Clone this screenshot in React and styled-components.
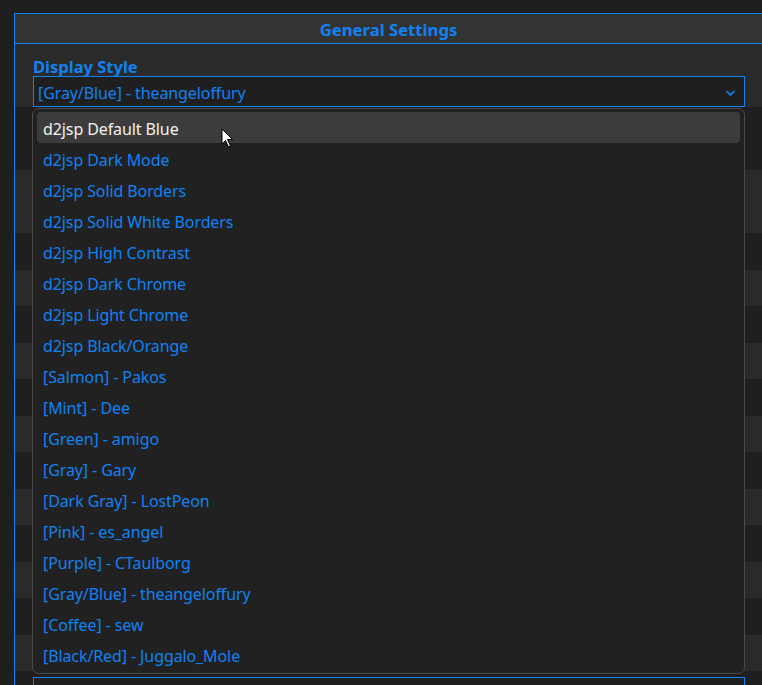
import React from 'react';
import styled, { createGlobalStyle } from 'styled-components';

const BLUE = '#1082f4';

const GlobalStyle = createGlobalStyle`
  html, body {
    margin: 0;
    background: #1f1f1f;
    font-family: "Noto Sans", "Open Sans", sans-serif;
  }
`;

const styleOptions = [
  'd2jsp Default Blue',
  'd2jsp Dark Mode',
  'd2jsp Solid Borders',
  'd2jsp Solid White Borders',
  'd2jsp High Contrast',
  'd2jsp Dark Chrome',
  'd2jsp Light Chrome',
  'd2jsp Black/Orange',
  '[Salmon] - Pakos',
  '[Mint] - Dee',
  '[Green] - amigo',
  '[Gray] - Gary',
  '[Dark Gray] - LostPeon',
  '[Pink] - es_angel',
  '[Purple] - CTaulborg',
  '[Gray/Blue] - theangeloffury',
  '[Coffee] - sew',
  '[Black/Red] - Juggalo_Mole',
];

const Page = styled.div`
  position: relative;
  height: 685px;
  overflow: hidden;
  padding-top: 13px;
  box-sizing: border-box;
`;

const Panel = styled.section`
  margin-left: 14px;
  width: 749px;
  border: 1px solid ${BLUE};
  border-bottom: none;
  box-sizing: border-box;
`;

const PanelHeader = styled.h2`
  margin: 0;
  height: 30px;
  padding-top: 2px;
  line-height: 27px;
  background: #333333;
  border-bottom: 1px solid ${BLUE};
  box-sizing: border-box;
  text-align: center;
  color: ${BLUE};
  font-size: 16.7px;
  font-weight: 700;
`;

const Row = styled.div`
  display: flex;
  flex-direction: column;
  justify-content: ${({ top }) => (top ? 'flex-start' : 'flex-end')};
  height: ${({ h }) => h}px;
  padding: ${({ top }) => top || 0}px 17px 0 18px;
  box-sizing: border-box;
  background: ${({ shade }) => (shade ? '#2a2a2a' : '#1f1f1f')};
`;

const Label = styled.label`
  color: ${BLUE};
  font-size: 16.5px;
  font-weight: 700;
  line-height: 18px;
`;

const Field = styled.div`
  position: relative;
  height: 31px;
  margin-bottom: ${({ gap }) => gap || 0}px;
  border: 1px solid ${BLUE};
  box-sizing: border-box;
  background: #1f1f1f;
`;

const SelectBox = styled(Field)`
  display: flex;
  align-items: center;
  justify-content: space-between;
  padding: 2px 8px 0 4px;
  color: ${BLUE};
  font-size: 16px;
  letter-spacing: -0.1px;
`;

const Chevron = styled.svg`
  width: 11px;
  height: 8px;
`;

const Popup = styled.ul`
  position: absolute;
  top: calc(100% + 2px);
  left: -2px;
  right: -1px;
  z-index: 2;
  margin: 0;
  padding: 3px 4px;
  list-style: none;
  background: #212121;
  border: 1px solid #4a4a4a;
  border-radius: 7px;
`;

const Option = styled.li`
  height: 31px;
  box-sizing: border-box;
  padding: 2px 0 0 6px;
  line-height: 30px;
  border-radius: 4px;
  font-size: 16px;
  letter-spacing: -0.1px;
  color: ${({ active }) => (active ? '#f2f2f2' : BLUE)};
  background: ${({ active }) => (active ? '#3c3c3c' : 'transparent')};
`;

const Pointer = styled.svg`
  position: absolute;
  left: 221px;
  top: 128px;
  width: 13px;
  height: 20px;
  z-index: 3;
`;

// striped settings rows sitting under the open list
const bands = [0, 1, 0, 1, 0, 1, 0, 1, 0, 1, 0, 1];

export default function App() {
  return (
    <Page>
      <GlobalStyle />
      <Panel>
        <PanelHeader>General Settings</PanelHeader>

        <Row h={63} shade={1}>
          <Label>Display Style</Label>
          <SelectBox>
            <span>[Gray/Blue] - theangeloffury</span>
            <Chevron viewBox="0 0 11 8">
              <path d="M1.5 2 L5.5 6 L9.5 2" fill="none" stroke={BLUE} strokeWidth="1.6" />
            </Chevron>
            <Popup>
              {styleOptions.map((name, i) => (
                <Option key={name} active={i === 0}>
                  {name}
                </Option>
              ))}
            </Popup>
          </SelectBox>
        </Row>

        <Row h={63} shade={0}>
          <Field gap={1} />
        </Row>
        <Row h={63} shade={1}>
          <Field gap={1} />
        </Row>

        {bands.map((shade, i) => (
          <Row key={i} h={36.5} shade={shade} />
        ))}
        <Row h={40} top={6} shade={0}>
          <Field />
        </Row>
      </Panel>

      <Pointer viewBox="0 0 13 20">
        <path
          d="M1 1 L1 16 L4.5 12.5 L7.5 19 L9.5 18 L6.5 11.5 L11.5 11.5 Z"
          fill="#fff"
          stroke="#000"
          strokeWidth="1"
          strokeLinejoin="round"
        />
      </Pointer>
    </Page>
  );
}
